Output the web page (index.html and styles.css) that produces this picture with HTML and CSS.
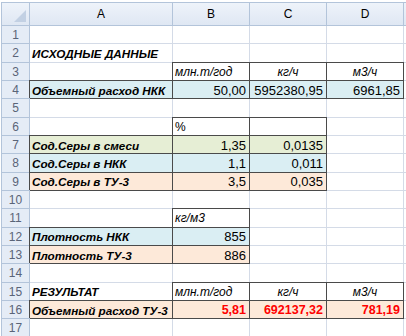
FILE: index.html
```html
<!DOCTYPE html>
<html>
<head>
<meta charset="utf-8">
<link rel="stylesheet" href="styles.css">
</head>
<body>
<div class="sheet">
  <div class="hd corner"></div><div class="hd">A</div><div class="hd">B</div><div class="hd">C</div><div class="hd">D</div><div class="hd"></div>

  <div class="rh">1</div><div class="c"></div><div class="c"></div><div class="c"></div><div class="c"></div><div class="c"></div>

  <div class="rh">2</div><div class="c lbl">ИСХОДНЫЕ ДАННЫЕ</div><div class="c"></div><div class="c"></div><div class="c"></div><div class="c"></div>

  <div class="rh">3</div><div class="c"></div><div class="c bx unit left">млн.т/год</div><div class="c bx unit">кг/ч</div><div class="c bx unit">м3/ч</div><div class="c"></div>

  <div class="rh">4</div><div class="c bx lbl blue">Объемный расход НКК</div><div class="c bx num blue">50,00</div><div class="c bx num blue">5952380,95</div><div class="c bx num blue">6961,85</div><div class="c"></div>

  <div class="rh">5</div><div class="c"></div><div class="c"></div><div class="c"></div><div class="c"></div><div class="c"></div>

  <div class="rh">6</div><div class="c"></div><div class="c bx plain">%</div><div class="c bx"></div><div class="c"></div><div class="c"></div>

  <div class="rh">7</div><div class="c bx lbl green">Сод.Серы в смеси</div><div class="c bx num green">1,35</div><div class="c bx num green">0,0135</div><div class="c"></div><div class="c"></div>

  <div class="rh">8</div><div class="c bx lbl blue">Сод.Серы в НКК</div><div class="c bx num blue">1,1</div><div class="c bx num blue">0,011</div><div class="c"></div><div class="c"></div>

  <div class="rh">9</div><div class="c bx lbl orange">Сод.Серы в ТУ-3</div><div class="c bx num orange">3,5</div><div class="c bx num orange">0,035</div><div class="c"></div><div class="c"></div>

  <div class="rh">10</div><div class="c"></div><div class="c"></div><div class="c"></div><div class="c"></div><div class="c"></div>

  <div class="rh">11</div><div class="c"></div><div class="c bx unit left">кг/м3</div><div class="c"></div><div class="c"></div><div class="c"></div>

  <div class="rh">12</div><div class="c bx lbl blue">Плотность НКК</div><div class="c bx num blue">855</div><div class="c"></div><div class="c"></div><div class="c"></div>

  <div class="rh">13</div><div class="c bx lbl orange">Плотность ТУ-3</div><div class="c bx num orange">886</div><div class="c"></div><div class="c"></div><div class="c"></div>

  <div class="rh">14</div><div class="c"></div><div class="c"></div><div class="c"></div><div class="c"></div><div class="c"></div>

  <div class="rh">15</div><div class="c lbl">РЕЗУЛЬТАТ</div><div class="c bx unit left">млн.т/год</div><div class="c bx unit">кг/ч</div><div class="c bx unit">м3/ч</div><div class="c"></div>

  <div class="rh">16</div><div class="c bx lbl orange">Объемный расход ТУ-3</div><div class="c bx num red orange">5,81</div><div class="c bx num red orange">692137,32</div><div class="c bx num red orange">781,19</div><div class="c"></div>

  <div class="rh">17</div><div class="c"></div><div class="c"></div><div class="c"></div><div class="c"></div><div class="c"></div>
</div>
</body>
</html>
```

FILE: styles.css
```css
html, body {
  margin: 0;
  padding: 0;
  background: #ffffff;
  overflow: hidden;
}

body {
  width: 406px;
  height: 336px;
  font-family: "Liberation Sans", Arial, sans-serif;
}

.sheet {
  display: grid;
  grid-template-columns: 27px 142px 76px 76px 76px 1fr;
  grid-template-rows: 22px repeat(17, 17.33px);
  gap: 1px;
  background: #d4dbe7;
  padding: 3px 0 0 2px;
  background-clip: content-box;
}

.sheet > div {
  background: #ffffff;
  display: flex;
  align-items: center;
  white-space: nowrap;
  overflow: hidden;
  color: #000000;
  padding-top: 1px;
}

.hd {
  justify-content: center;
  font-size: 12px;
  color: #5a6478;
  box-shadow: 0 0 0 1px #b3c4da;
}

.sheet > .hd {
  background: linear-gradient(#eef3fa, #dfe7f3);
  padding-top: 0;
}

.corner {
  position: relative;
}

.corner::after {
  content: "";
  position: absolute;
  right: 3px;
  bottom: 3px;
  border-style: solid;
  border-width: 0 0 12px 12px;
  border-color: transparent transparent #c2d0e3 transparent;
}

.sheet > .rh {
  justify-content: center;
  font-size: 12px;
  color: #5a6478;
  background: #e5ecf6;
  box-shadow: 0 0 0 1px #b3c4da;
}

.bx {
  box-shadow: 0 0 0 1px #4a4a4a;
}

.lbl {
  font-weight: bold;
  font-style: italic;
  font-size: 11.7px;
  padding-left: 2px;
}

.num {
  justify-content: flex-end;
  font-size: 13px;
  padding-right: 3px;
}

.unit {
  justify-content: center;
  font-style: italic;
  font-size: 12px;
}

.unit.left {
  justify-content: flex-start;
  padding-left: 2px;
}

.plain {
  font-size: 12px;
  padding-left: 2px;
}

.sheet > .blue {
  background: #daeef3;
}

.sheet > .green {
  background: #e6eed5;
}

.sheet > .orange {
  background: #fde9d9;
}

.sheet > .red {
  color: #ff0000;
  font-weight: bold;
  font-size: 12.5px;
}
```
